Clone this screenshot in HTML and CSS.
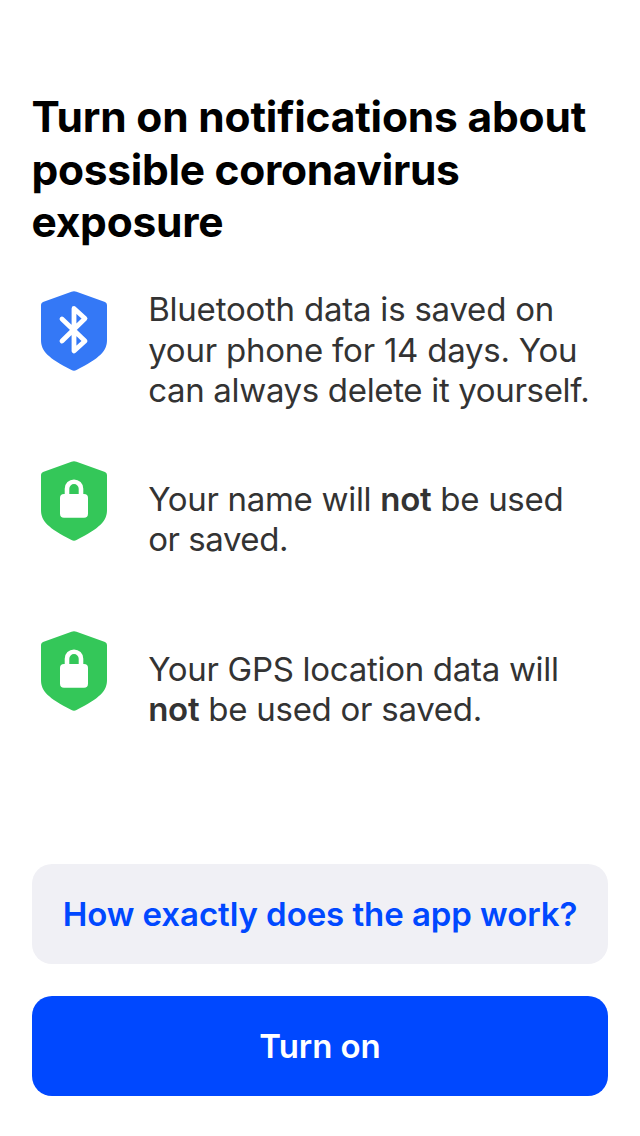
FILE: index.html
```html
<!DOCTYPE html>
<html lang="en">
<head>
<meta charset="utf-8">
<title>Exposure notifications</title>
<link rel="stylesheet" href="styles.css">
</head>
<body>
<main class="screen">
  <h1 class="title"><span class="line t1">Turn on notifications about</span><span class="line t2">possible coronavirus</span><span class="line t3">exposure</span></h1>
  <ul class="features">
    <li class="feature">
      <svg class="shield" viewBox="0 0 68 82"><path class="blue" d="M31.5 1.7Q34 .6 36.5 1.7L65 12Q67 13 67 15V50C67 61 60 68 36.5 80Q34 81.6 31.5 80C8 68 1 61 1 50V15Q1 13 3 12Z"/><path class="rune" d="M22 29 45 51 34 61V18.5L45 28.5 22 51"/></svg>
      <p class="text first"><span class="line b1">Bluetooth data is saved on</span><span class="line b2">your phone for 14 days. You</span><span class="line b3">can always delete it yourself.</span></p>
    </li>
    <li class="feature">
      <svg class="shield" viewBox="0 0 68 82"><path class="green" d="M31.5 1.7Q34 .6 36.5 1.7L65 12Q67 13 67 15V50C67 61 60 68 36.5 80Q34 81.6 31.5 80C8 68 1 61 1 50V15Q1 13 3 12Z"/><rect class="lock" x="20" y="34" width="28" height="23.7" rx="4"/><path class="shackle" d="M27 36V28.7a7 7 0 0 1 14 0V36"/></svg>
      <p class="text"><span class="line n1">Your name will <b>not</b> be used</span><span class="line n2">or saved.</span></p>
    </li>
    <li class="feature">
      <svg class="shield" viewBox="0 0 68 82"><path class="green" d="M31.5 1.7Q34 .6 36.5 1.7L65 12Q67 13 67 15V50C67 61 60 68 36.5 80Q34 81.6 31.5 80C8 68 1 61 1 50V15Q1 13 3 12Z"/><rect class="lock" x="20" y="34" width="28" height="23.7" rx="4"/><path class="shackle" d="M27 36V28.7a7 7 0 0 1 14 0V36"/></svg>
      <p class="text"><span class="line g1">Your GPS location data will</span><span class="line g2"><b>not</b> be used or saved.</span></p>
    </li>
  </ul>
  <div class="actions">
    <button class="button secondary">How exactly does the app work?</button>
    <button class="button primary">Turn on</button>
  </div>
</main>
</body>
</html>
```

FILE: styles.css
```css
* { box-sizing: border-box; }
body { margin: 0; background: #fff; font-family: Inter, sans-serif; }
.screen { height: 1136px; padding: 91px 32px 40px; display: flex; flex-direction: column; }
.line { display: block; width: max-content; white-space: nowrap; }
.title { margin: 0 0 0 -0.5px; font-size: 42.5px; line-height: 52.5px; font-weight: 700; color: #000; }
.t1 { letter-spacing: -0.2px; }
.t2 { letter-spacing: -0.3px; }
.t3 { letter-spacing: -0.25px; }
.features { list-style: none; margin: 41.5px 0 0; padding: 0; }
.feature { display: flex; height: 170px; padding-left: 8px; }
.shield { width: 68px; height: 82px; flex: none; }
.blue { fill: #3478f6; }
.green { fill: #34c759; }
.rune { fill: none; stroke: #fff; stroke-width: 4.8; stroke-linejoin: round; stroke-linecap: round; }
.lock { fill: #fff; }
.shackle { fill: none; stroke: #fff; stroke-width: 4.6; }
.text { margin: 19px 0 0 40.2px; font-size: 33px; line-height: 40.4px; color: #333; }
.text.first { margin-top: -0.6px; }
.text b { font-weight: 600; }
.b1 { letter-spacing: -0.22px; }
.b2 { letter-spacing: -0.23px; }
.b3 { letter-spacing: -0.33px; }
.n1 { letter-spacing: -0.3px; }
.n2 { letter-spacing: -0.45px; }
.g1 { letter-spacing: -0.29px; }
.g2 { letter-spacing: -0.27px; }
.actions { margin-top: auto; display: grid; gap: 32px; }
.button { height: 100px; border: 0; padding: 0 0 1px; border-radius: 20px; font: 600 33px Inter, sans-serif; letter-spacing: -0.07px; }
.secondary { background: #f0f0f5; color: #0048ff; }
.primary { background: #0048ff; color: #fff; }
```
